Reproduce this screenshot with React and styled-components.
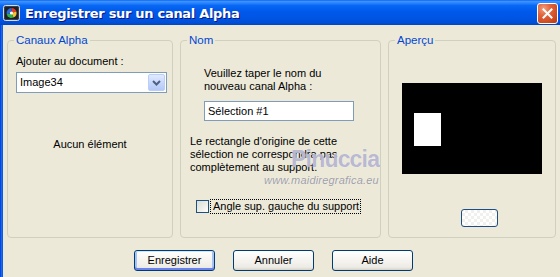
import React from 'react';
import styled, { createGlobalStyle } from 'styled-components';

const Global = createGlobalStyle`
  html, body { margin: 0; padding: 0; }
  body {
    width: 560px; height: 277px; overflow: hidden; background: #ECE9D8;
    font-family: "Liberation Sans", Arial, sans-serif; font-size: 11px; color: #000;
  }
  * { box-sizing: border-box; }
`;

const Window = styled.div`
  position: relative;
  width: 560px; height: 277px;
  display: flex; flex-direction: column;
  overflow: hidden; background: #ECE9D8;
`;

const TitleBar = styled.div`
  height: 25px; flex: none;
  display: flex; align-items: center;
  padding: 0 2px 0 2px;
  background: linear-gradient(180deg, #0A5FF0 0%, #3D95FF 5%, #2A85FF 12%, #0868F4 22%, #0059EA 45%, #0055E5 70%, #0050D9 88%, #0046C8 100%);
`;

const TitleIcon = styled.svg`
  width: 18px; height: 16px; flex: none; margin: 1px 4px 0 1px;
`;

const TitleText = styled.div`
  flex: 1;
  color: #fff; font-weight: bold; font-size: 13px;
  font-family: "DejaVu Sans", "Liberation Sans", sans-serif;
  letter-spacing: -0.3px;
  text-shadow: 1px 1px 0 #0A1883;
  margin-top: 1px;
`;

const CloseButton = styled.div`
  width: 21px; height: 21px; flex: none;
  border: 1px solid #fff; border-radius: 3px;
  background: radial-gradient(circle at 30% 25%, #F0A080 0%, #E2643C 35%, #C9461C 80%, #B83A12 100%);
  display: flex; align-items: center; justify-content: center;
  margin-top: 1px;
`;

const Frame = styled.div`
  flex: 1; display: flex; min-height: 0;
`;

const SideBorder = styled.div`
  width: 3px; flex: none;
  background: linear-gradient(90deg, #0831D9 0%, #166AEE 50%, #0855DD 100%);
`;

const Content = styled.div`
  flex: 1; display: flex; flex-direction: column;
  padding: 9px 4px 0 4px;
`;

const Groups = styled.div`
  display: flex; gap: 7px;
`;

const Group = styled.fieldset`
  width: ${p => p.$w}px; height: 204px;
  margin: 0; padding: 0 6px 0 0;
  border: 1px solid #D0D0BF; border-radius: 4px;
  display: flex; flex-direction: column;
  min-width: 0;
`;

const Legend = styled.legend`
  color: #0046D5; font-size: 11.5px; line-height: 13px;
  padding: 0 2px; margin-left: 6px;
`;

const Label = styled.div`
  line-height: 13px;
  margin: ${p => p.$m || '0'};
  text-align: ${p => p.$center ? 'center' : 'left'};
  white-space: pre-line;
`;

const Select = styled.div`
  margin: 4px 0 0 8px;
  width: 151px; height: 21px;
  border: 1px solid #7F9DB9; background: #fff;
  display: flex; align-items: center;
  padding: 0 1px 0 3px;
`;

const SelectValue = styled.span`
  flex: 1; line-height: 13px;
`;

const DropButton = styled.div`
  width: 17px; height: 17px;
  border: 1px solid #B9CEF9; border-radius: 2px;
  background: linear-gradient(180deg, #E1EAFE 0%, #CBDAFC 45%, #B4C8F6 100%);
  display: flex; align-items: center; justify-content: center;
`;

const TextInput = styled.div`
  margin: 8px 0 0 23px;
  width: 150px; height: 20px;
  border: 1px solid #7F9DB9; background: #fff;
  display: flex; align-items: center; padding-left: 3px;
  line-height: 13px;
`;

const CheckRow = styled.div`
  display: flex; align-items: center;
  margin: 25px 0 0 15px;
`;

const CheckBox = styled.div`
  width: 13px; height: 13px;
  border: 1px solid #1C5180;
  background: linear-gradient(135deg, #DCDCD7 0%, #F0F0EA 60%, #FFFFFF 100%);
`;

const CheckLabel = styled.div`
  margin-left: 1px;
  border: 1px dotted #000;
  padding: 0 1px 0 2px;
  line-height: 13px;
`;

const Preview = styled.div`
  margin: 36px 0 0 13px;
  width: 140px; height: 91px;
  background: #000;
  display: flex; align-items: flex-start;
  padding: 30px 0 0 12px;
`;

const PreviewSel = styled.div`
  width: 27px; height: 33px; background: #fff;
`;

const SmallButton = styled.div`
  margin: 35px 0 0 72px;
  width: 37px; height: 18px;
  border: 1px solid #1F4E85; border-radius: 3px;
  background:
    repeating-conic-gradient(#F0F0EC 0% 25%, #FFFFFF 0% 50%) 0 0 / 6px 6px;
`;

const ButtonRow = styled.div`
  display: flex; gap: 18px;
  margin-top: 12px; padding-left: 127px;
`;

const Button = styled.div`
  width: 81px; height: 21px;
  border: 1px solid #003C74; border-radius: 3px;
  background: linear-gradient(180deg, #FFFFFF 0%, #F6F5F1 45%, #ECEBE6 85%, #D8D2C6 100%);
  display: flex; align-items: center; justify-content: center;
  line-height: 13px;
  box-shadow: ${p => p.$default
    ? 'inset 0 1px 0 #CEE7FF, inset 0 -2px 0 #6982EE, inset 2px 0 0 #A9C2F4, inset -2px 0 0 #A9C2F4'
    : 'none'};
`;

const Watermark = styled.div`
  position: absolute;
  left: ${p => p.$x}px; top: ${p => p.$y}px;
  color: ${p => p.$c};
  font-size: ${p => p.$s}px;
  font-weight: ${p => p.$b ? 'bold' : 'normal'};
  letter-spacing: ${p => p.$ls || 0}px;
  font-style: ${p => p.$i ? 'italic' : 'normal'};
  line-height: 1;
  text-shadow: 0 0 1px rgba(255,255,255,0.7);
  pointer-events: none;
`;

export default function App() {
  return (
    <>
      <Global />
      <Window>
        <TitleBar>
          <TitleIcon viewBox="0 0 18 16">
            <rect x="0.5" y="0.5" width="16" height="15" rx="2" fill="#3A3F4A" stroke="#D8DCE6" />
            <rect x="2" y="2" width="13" height="12" rx="1" fill="#1B1F28" />
            <path d="M8.5 8 L8.5 3 A5 5 0 0 1 13.3 6.6 Z" fill="#E43A2A" />
            <path d="M8.5 8 L13.3 6.6 A5 5 0 0 1 10.5 12.6 Z" fill="#F2C230" />
            <path d="M8.5 8 L10.5 12.6 A5 5 0 0 1 3.7 9.2 Z" fill="#2FB04A" />
            <path d="M8.5 8 L3.7 9.2 A5 5 0 0 1 8.5 3 Z" fill="#2A6CE0" />
            <circle cx="8.5" cy="8" r="1.6" fill="#fff" />
          </TitleIcon>
          <TitleText>Enregistrer sur un canal Alpha</TitleText>
          <CloseButton>
            <svg width="11" height="11" viewBox="0 0 11 11">
              <path d="M1.5 1.5 L9.5 9.5 M9.5 1.5 L1.5 9.5" stroke="#fff" strokeWidth="2" strokeLinecap="square" />
            </svg>
          </CloseButton>
        </TitleBar>
        <Frame>
          <SideBorder />
          <Content>
            <Groups>
              <Group $w={166}>
                <Legend>Canaux Alpha</Legend>
                <Label $m="8px 0 0 8px">Ajouter au document :</Label>
                <Select>
                  <SelectValue>Image34</SelectValue>
                  <DropButton>
                    <svg width="9" height="6" viewBox="0 0 9 6">
                      <path d="M1 1 L4.5 4.5 L8 1" fill="none" stroke="#4D6185" strokeWidth="2" />
                    </svg>
                  </DropButton>
                </Select>
                <Label $center $m="45px 0 0 6px">Aucun élément</Label>
              </Group>
              <Group $w={201}>
                <Legend>Nom</Legend>
                <Label $m="20px 0 0 23px">{'Veuillez taper le nom du\nnouveau canal Alpha :'}</Label>
                <TextInput>Sélection #1</TextInput>
                <Label $m="14px 0 0 9px">{"Le rectangle d'origine de cette\nsélection ne correspondra pas\ncomplètement au support."}</Label>
                <CheckRow>
                  <CheckBox />
                  <CheckLabel>Angle sup. gauche du support</CheckLabel>
                </CheckRow>
              </Group>
              <Group $w={168}>
                <Legend>Aperçu</Legend>
                <Preview>
                  <PreviewSel />
                </Preview>
                <SmallButton />
              </Group>
            </Groups>
            <ButtonRow>
              <Button $default>Enregistrer</Button>
              <Button>Annuler</Button>
              <Button>Aide</Button>
            </ButtonRow>
          </Content>
        </Frame>
        <Watermark $x={291} $y={148} $s={23} $b $ls={-0.8} $c="rgba(176,176,206,0.88)">Pinuccia</Watermark>
        <Watermark $x={264} $y={175} $s={11} $i $ls={0.2} $c="rgba(128,128,146,0.75)">www.maidiregrafica.eu</Watermark>
      </Window>
    </>
  );
}
